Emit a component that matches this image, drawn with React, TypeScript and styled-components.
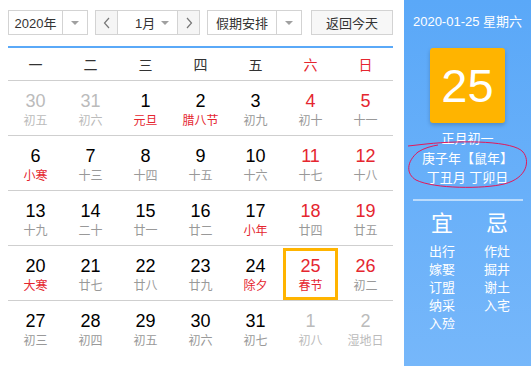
import React from 'react'
import styled, { createGlobalStyle } from 'styled-components'

const GlobalStyle = createGlobalStyle`
  body {
    margin: 0;
    font-family: "Liberation Sans", "Noto Sans CJK SC", sans-serif;
    background: #fff;
  }
`

const RED = '#e5262f'

type Day = {
  n: number
  lunar: string
  other?: boolean
  fest?: boolean
  today?: boolean
}

const rows: Day[][] = [
  [
    { n: 30, lunar: '初五', other: true },
    { n: 31, lunar: '初六', other: true },
    { n: 1, lunar: '元旦', fest: true },
    { n: 2, lunar: '腊八节', fest: true },
    { n: 3, lunar: '初九' },
    { n: 4, lunar: '初十' },
    { n: 5, lunar: '十一' },
  ],
  [
    { n: 6, lunar: '小寒', fest: true },
    { n: 7, lunar: '十三' },
    { n: 8, lunar: '十四' },
    { n: 9, lunar: '十五' },
    { n: 10, lunar: '十六' },
    { n: 11, lunar: '十七' },
    { n: 12, lunar: '十八' },
  ],
  [
    { n: 13, lunar: '十九' },
    { n: 14, lunar: '二十' },
    { n: 15, lunar: '廿一' },
    { n: 16, lunar: '廿二' },
    { n: 17, lunar: '小年', fest: true },
    { n: 18, lunar: '廿四' },
    { n: 19, lunar: '廿五' },
  ],
  [
    { n: 20, lunar: '大寒', fest: true },
    { n: 21, lunar: '廿七' },
    { n: 22, lunar: '廿八' },
    { n: 23, lunar: '廿九' },
    { n: 24, lunar: '除夕', fest: true },
    { n: 25, lunar: '春节', fest: true, today: true },
    { n: 26, lunar: '初二' },
  ],
  [
    { n: 27, lunar: '初三' },
    { n: 28, lunar: '初四' },
    { n: 29, lunar: '初五' },
    { n: 30, lunar: '初六' },
    { n: 31, lunar: '初七' },
    { n: 1, lunar: '初八', other: true },
    { n: 2, lunar: '湿地日', other: true },
  ],
]

const weekdays = ['一', '二', '三', '四', '五', '六', '日']
const yi = ['出行', '嫁娶', '订盟', '纳采', '入殓']
const ji = ['作灶', '掘井', '谢土', '入宅']

const Page = styled.div`
  display: flex;
  width: 531px;
  height: 366px;
  overflow: hidden;
`

const Main = styled.div`
  width: 385px;
  padding: 10px 11px 0 8px;
`

const Toolbar = styled.div`
  display: flex;
  height: 25px;
`

const Select = styled.div<{ $w: number; $ml?: number }>`
  display: flex;
  width: ${(p) => p.$w}px;
  margin-left: ${(p) => p.$ml ?? 0}px;
  box-sizing: border-box;
  border: 1px solid #d3d3d3;
  background: #fff;
  font-size: 13px;
  color: #333;
`

const SelectText = styled.div`
  flex: 1;
  display: flex;
  align-items: center;
  justify-content: center;
`

const Caret = styled.div`
  width: 24px;
  border-left: 1px solid #d3d3d3;
  display: flex;
  align-items: center;
  justify-content: center;
  &::after {
    content: '';
    border-left: 4px solid transparent;
    border-right: 4px solid transparent;
    border-top: 4px solid #a0a0a0;
  }
`

const MonthBox = styled.div`
  display: flex;
  width: 105px;
  margin-left: 7px;
  box-sizing: border-box;
  border: 1px solid #d3d3d3;
  font-size: 13px;
  color: #333;
`

const NavBtn = styled.div<{ $side: 'l' | 'r' }>`
  width: 21px;
  display: flex;
  align-items: center;
  justify-content: center;
  background: #f5f5f5;
  ${(p) => (p.$side === 'l' ? 'border-right' : 'border-left')}: 1px solid #d3d3d3;
`

const MonthInner = styled.div`
  flex: 1;
  display: flex;
  align-items: center;
  padding-left: 17px;
  justify-content: space-between;
  &::after {
    content: '';
    margin-right: 8px;
    border-left: 4px solid transparent;
    border-right: 4px solid transparent;
    border-top: 4px solid #a0a0a0;
  }
`

const TodayBtn = styled.div`
  width: 82px;
  margin-left: 9px;
  box-sizing: border-box;
  border: 1px solid #d3d3d3;
  background: #f7f7f7;
  font-size: 13px;
  color: #333;
  display: flex;
  align-items: center;
  justify-content: center;
`

const Grid = styled.div`
  margin-top: 11px;
  border-top: 2px solid #5aa9f8;
`

const HeadRow = styled.div`
  display: grid;
  grid-template-columns: repeat(7, 55px);
  height: 32px;
  border-bottom: 1px solid #cfcfcf;
`

const HeadCell = styled.div<{ $red?: boolean }>`
  display: flex;
  align-items: center;
  justify-content: center;
  font-size: 14px;
  color: ${(p) => (p.$red ? RED : '#333')};
`

const Row = styled.div<{ $last?: boolean }>`
  display: grid;
  grid-template-columns: repeat(7, 55px);
  height: 54px;
  border-bottom: 1px solid ${(p) => (p.$last ? 'transparent' : '#cfcfcf')};
`

const Cell = styled.div<{ $today?: boolean }>`
  display: flex;
  flex-direction: column;
  align-items: center;
  padding-top: 10px;
  box-sizing: border-box;
  ${(p) =>
    p.$today &&
    `
    margin: 2px 0 0;
    padding-top: 5px;
    border: 3px solid #ffb400;
  `}
`

const Num = styled.div<{ $color: string }>`
  font-size: 18px;
  line-height: 20px;
  color: ${(p) => p.$color};
`

const Lunar = styled.div<{ $color: string }>`
  font-size: 12px;
  line-height: 18px;
  margin-top: 1px;
  color: ${(p) => p.$color};
`

const Side = styled.div`
  position: relative;
  width: 127px;
  height: 366px;
  background: linear-gradient(#5aa8f8, #76b7fa);
  color: #fff;
  display: flex;
  flex-direction: column;
  align-items: center;
  padding-top: 14px;
  box-sizing: border-box;
`

const DateLine = styled.div`
  font-size: 13px;
  line-height: 16px;
`

const BigDay = styled.div`
  margin-top: 18px;
  width: 75px;
  height: 75px;
  border-radius: 3px;
  background: #ffb400;
  box-shadow: 0 2px 4px rgba(0, 0, 0, 0.2);
  display: flex;
  align-items: center;
  justify-content: center;
  font-size: 47px;
`

const LunarLine = styled.div<{ $mt: number }>`
  margin-top: ${(p) => p.$mt}px;
  font-size: 13px;
  line-height: 19px;
`

const Divider = styled.div`
  margin-top: 12px;
  width: 110px;
  height: 2px;
  background: rgba(255, 255, 255, 0.55);
`

const Advice = styled.div`
  display: flex;
  margin-top: 10px;
  padding-left: 4px;
`

const AdviceCol = styled.div`
  width: 55px;
  display: flex;
  flex-direction: column;
  align-items: center;
`

const AdviceTitle = styled.div`
  font-size: 22px;
  line-height: 26px;
  margin-bottom: 6px;
`

const AdviceItem = styled.div`
  font-size: 13px;
  line-height: 18px;
`

const Scribble = styled.svg`
  position: absolute;
  left: 0;
  top: 0;
  pointer-events: none;
`

const Chevron = ({ dir }: { dir: 'l' | 'r' }) => (
  <svg width="8" height="12" viewBox="0 0 8 12">
    <path
      d={dir === 'l' ? 'M6 1 L1.5 6 L6 11' : 'M2 1 L6.5 6 L2 11'}
      fill="none"
      stroke="#777"
      strokeWidth="1.2"
    />
  </svg>
)

export default function App() {
  return (
    <Page>
      <GlobalStyle />
      <Main>
        <Toolbar>
          <Select $w={80}>
            <SelectText>2020年</SelectText>
            <Caret />
          </Select>
          <MonthBox>
            <NavBtn $side="l">
              <Chevron dir="l" />
            </NavBtn>
            <MonthInner>1月</MonthInner>
            <NavBtn $side="r">
              <Chevron dir="r" />
            </NavBtn>
          </MonthBox>
          <Select $w={95} $ml={7}>
            <SelectText>假期安排</SelectText>
            <Caret />
          </Select>
          <TodayBtn>返回今天</TodayBtn>
        </Toolbar>
        <Grid>
          <HeadRow>
            {weekdays.map((w, i) => (
              <HeadCell key={w} $red={i >= 5}>
                {w}
              </HeadCell>
            ))}
          </HeadRow>
          {rows.map((row, ri) => (
            <Row key={ri} $last={ri === rows.length - 1}>
              {row.map((d, ci) => {
                const weekend = ci >= 5
                const numColor = d.other ? '#bbb' : weekend ? RED : '#000'
                const lunarColor = d.other ? '#bbb' : d.fest ? RED : '#999'
                return (
                  <Cell key={ci} $today={d.today}>
                    <Num $color={numColor}>{d.n}</Num>
                    <Lunar $color={lunarColor}>{d.lunar}</Lunar>
                  </Cell>
                )
              })}
            </Row>
          ))}
        </Grid>
      </Main>
      <Side>
        <DateLine>2020-01-25 星期六</DateLine>
        <BigDay>25</BigDay>
        <LunarLine $mt={6}>正月初一</LunarLine>
        <LunarLine $mt={1}>庚子年【鼠年】</LunarLine>
        <LunarLine $mt={0}>丁丑月 丁卯日</LunarLine>
        <Divider />
        <Advice>
          <AdviceCol>
            <AdviceTitle>宜</AdviceTitle>
            {yi.map((t) => (
              <AdviceItem key={t}>{t}</AdviceItem>
            ))}
          </AdviceCol>
          <AdviceCol>
            <AdviceTitle>忌</AdviceTitle>
            {ji.map((t) => (
              <AdviceItem key={t}>{t}</AdviceItem>
            ))}
          </AdviceCol>
        </Advice>
        <Scribble width="127" height="366" viewBox="0 0 127 366">
          <path
            d="M4 146 L22 144 C60 140 110 141 119 152 C126 160 124 178 100 184 C80 189 30 189 12 180 C2 174 2 162 14 152 C20 148 28 146 34 145"
            fill="none"
            stroke="#e3185a"
            strokeWidth="1"
          />
        </Scribble>
      </Side>
    </Page>
  )
}
